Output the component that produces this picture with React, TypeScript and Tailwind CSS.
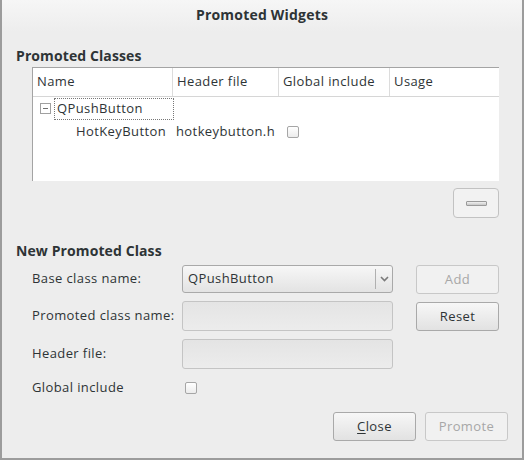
import React from "react";

const font = { fontFamily: '"Open Sans", "DejaVu Sans", sans-serif' };

function CheckBox() {
  return (
    <div className="w-[12px] h-[12px] rounded-[2px] border border-[#a6a6a6] bg-gradient-to-b from-[#ffffff] to-[#ececec]" />
  );
}

function Button({ label, disabled, underline }: { label: string; disabled?: boolean; underline?: boolean }) {
  return (
    <button
      className={`w-[83px] h-[29px] rounded-[3px] border text-[13px] tracking-[0.4px] flex items-center justify-center ${
        disabled
          ? "border-[#c8c8c8] bg-[#f1f1f1] text-[#a7a7a7]"
          : "border-[#a9a9a9] bg-gradient-to-b from-[#f7f7f7] to-[#e2e2e2] text-[#2e3436]"
      }`}
    >
      {underline ? (
        <span>
          <span className="underline underline-offset-2">{label[0]}</span>
          {label.slice(1)}
        </span>
      ) : (
        label
      )}
    </button>
  );
}

function Field() {
  return (
    <div className="w-[211px] h-[30px] rounded-[3px] border border-[#c4c4c4] bg-gradient-to-b from-[#e4e4e4] to-[#ececec]" />
  );
}

export default function App() {
  return (
    <div
      style={font}
      className="w-[524px] h-[460px] bg-[#ededed] border-x-2 border-b-2 border-[#9c9c9c] flex flex-col text-[#2e3436] text-[13px] tracking-[0.4px] overflow-hidden"
    >
      {/* Title bar */}
      <div className="h-[32px] shrink-0 bg-gradient-to-b from-[#f6f6f6] to-[#ededed] flex items-center justify-center pb-[3px]">
        <span className="font-bold text-[14px] tracking-[0.2px]">Promoted Widgets</span>
      </div>

      {/* Promoted Classes */}
      <div className="pl-[14px] mt-[14px] h-[18px] flex items-center font-bold text-[14px] tracking-[0.1px]">Promoted Classes</div>

      <div className="ml-[30px] mr-[23px] mt-[3px] h-[114px] bg-white border-t border-l border-[#a4a4a4] flex flex-col">
        <div className="h-[29px] flex items-center border-b border-[#d6d6d6] shrink-0">
          <div className="w-[140px] pl-[4px] h-full flex items-center border-r border-[#dcdcdc]">Name</div>
          <div className="w-[106px] pl-[4px] h-full flex items-center border-r border-[#dcdcdc]">Header file</div>
          <div className="w-[111px] pl-[4px] h-full flex items-center border-r border-[#dcdcdc]">Global include</div>
          <div className="flex-1 pl-[4px] h-full flex items-center">Usage</div>
        </div>
        <div className="h-[23px] flex items-center">
          <div className="ml-[7px] w-[11px] h-[11px] border border-[#a0a0a0] flex items-center justify-center">
            <div className="w-[5px] h-[1px] bg-[#707070]" />
          </div>
          <div className="ml-[3px] w-[120px] h-[22px] border border-dotted border-[#777] flex items-center pl-[2px]">
            QPushButton
          </div>
        </div>
        <div className="h-[24px] flex items-center">
          <div className="w-[140px] pl-[43px] whitespace-nowrap">HotKeyButton</div>
          <div className="w-[114px] pl-[3px] whitespace-nowrap">hotkeybutton.h</div>
          <CheckBox />
        </div>
      </div>

      <div className="flex justify-end mr-[23px] mt-[7px]">
        <button className="w-[46px] h-[30px] rounded-[4px] border border-[#c2c2c2] bg-[#f2f2f2] flex items-center justify-center">
          <div className="w-[21px] h-[5px] rounded-[1px] border border-[#9a9a9a] bg-gradient-to-b from-[#f0f0f0] to-[#c8c8c8]" />
        </button>
      </div>

      {/* New Promoted Class */}
      <div className="pl-[14px] mt-[23px] h-[18px] flex items-center font-bold text-[14px] tracking-[0.1px]">New Promoted Class</div>

      <div className="ml-[30px] mt-[6px] flex">
        <div className="flex flex-col">
          <div className="flex items-center h-[28px]">
            <div className="w-[150px]">Base class name:</div>
            <div className="w-[211px] h-[28px] rounded-[3px] border border-[#a9a9a9] bg-gradient-to-b from-[#f7f7f7] to-[#e3e3e3] flex items-center">
              <span className="flex-1 pl-[5px]">QPushButton</span>
              <div className="w-[1px] h-[20px] bg-[#b0b0b0]" />
              <div className="w-[16px] flex items-center justify-center">
                <svg width="9" height="6" viewBox="0 0 9 6">
                  <path d="M1 1 L4.5 4.5 L8 1" fill="none" stroke="#7a7a7a" strokeWidth="1.6" />
                </svg>
              </div>
            </div>
          </div>
          <div className="flex items-center h-[30px] mt-[8px]">
            <div className="w-[150px] whitespace-nowrap">Promoted class name:</div>
            <Field />
          </div>
          <div className="flex items-center h-[30px] mt-[8px]">
            <div className="w-[150px]">Header file:</div>
            <Field />
          </div>
          <div className="flex items-center h-[20px] mt-[9px]">
            <div className="w-[153px]">Global include</div>
            <CheckBox />
          </div>
        </div>
        <div className="flex flex-col ml-[23px]">
          <Button label="Add" disabled />
          <div className="mt-[8px]">
            <Button label="Reset" />
          </div>
        </div>
      </div>

      <div className="flex justify-end mr-[14px] mt-[14px] gap-[9px]">
        <Button label="Close" underline />
        <Button label="Promote" disabled />
      </div>
    </div>
  );
}
